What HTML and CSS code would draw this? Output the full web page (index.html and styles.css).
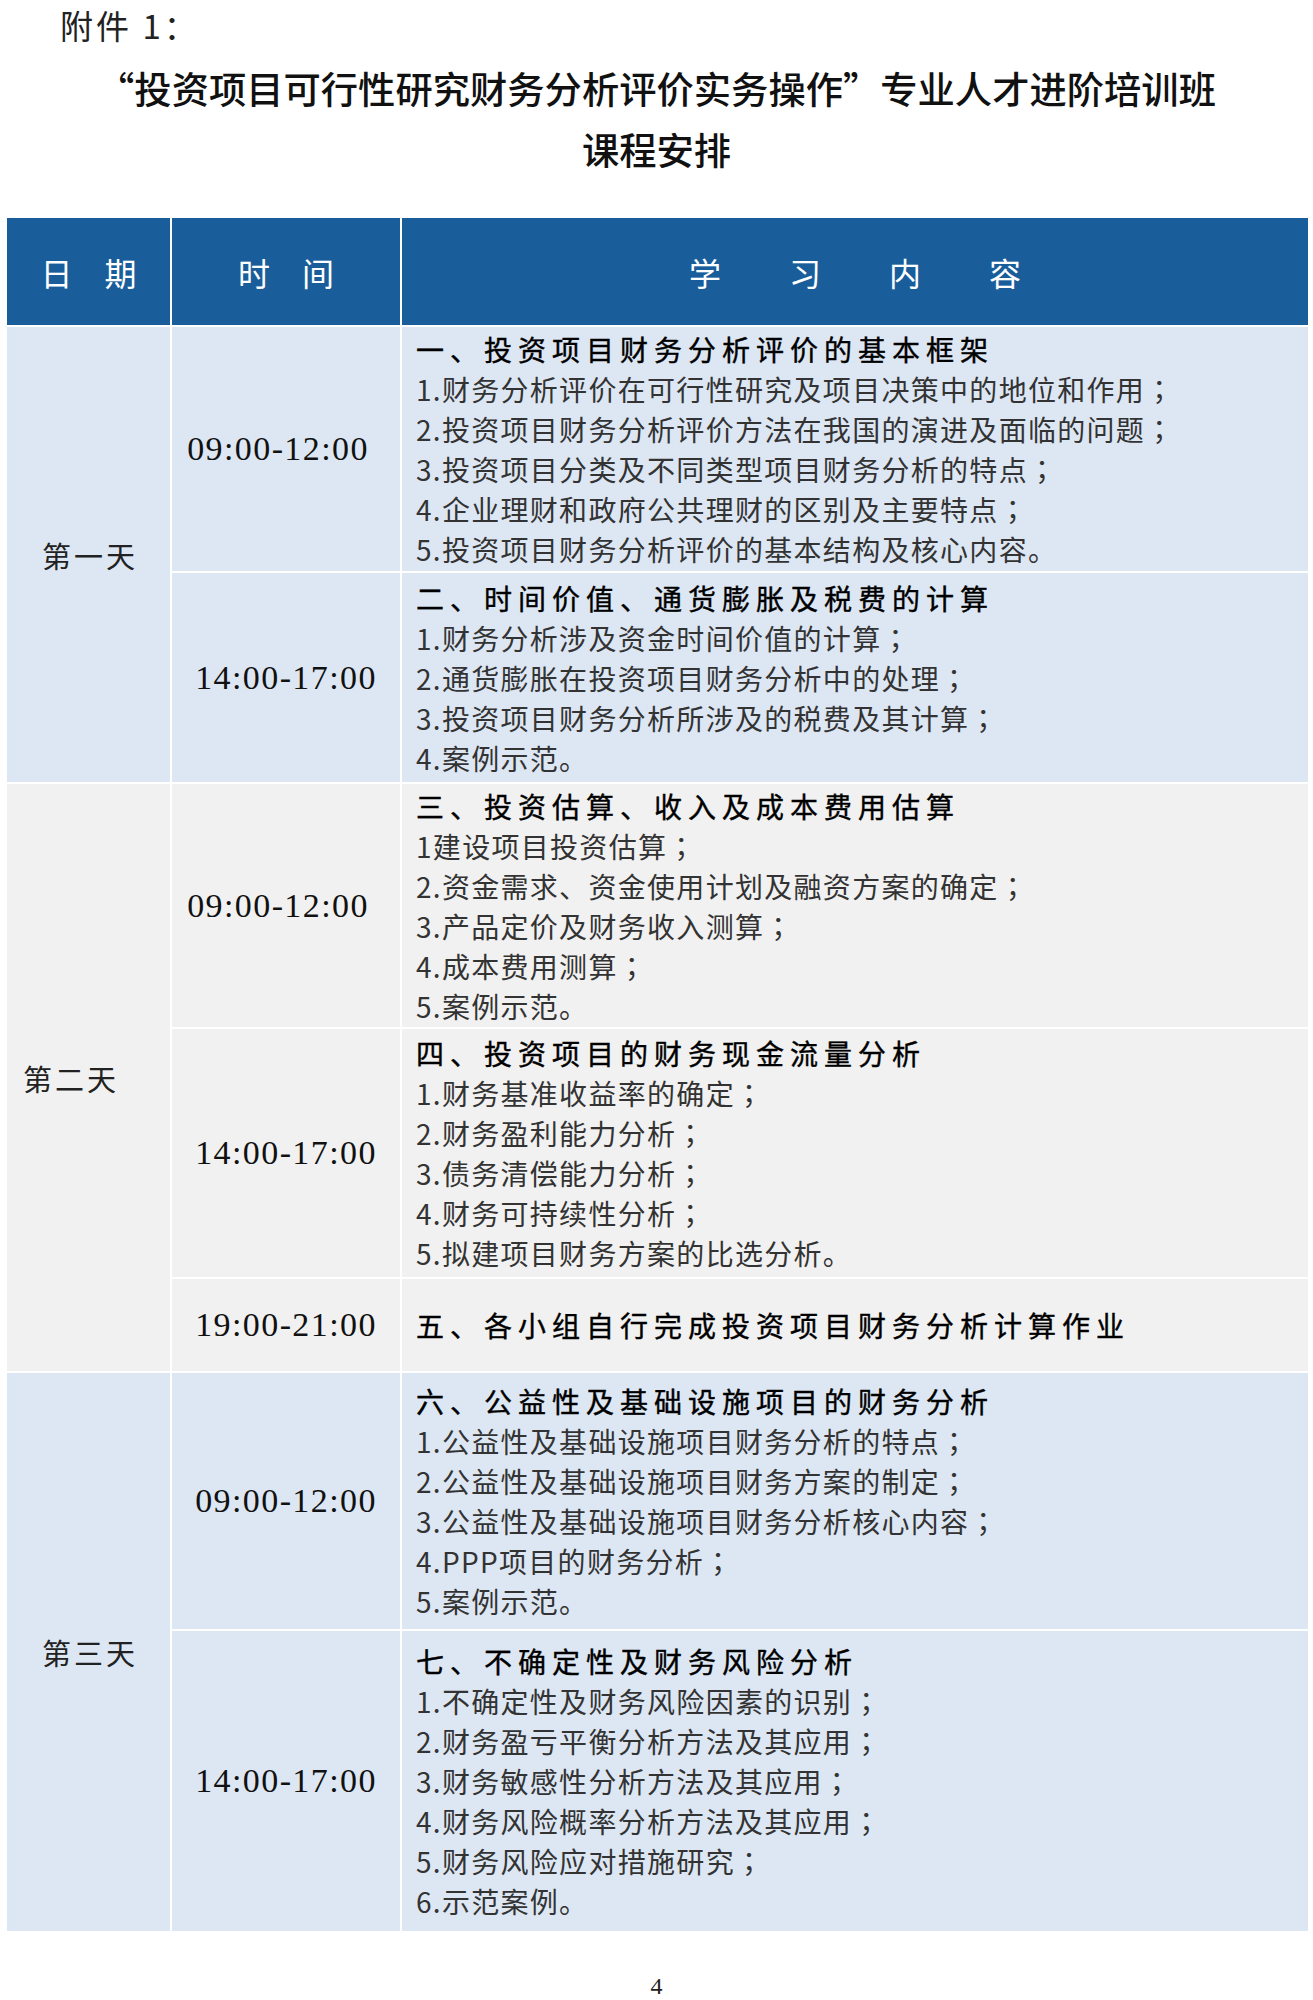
FILE: index.html
```html
<!DOCTYPE html>
<html lang="zh-CN">
<head>
<meta charset="utf-8">
<title>课程安排</title>
<link rel="stylesheet" href="styles.css">
</head>
<body>
<div class="page">
  <p class="attach">附件 1：</p>
  <h1 class="title">
    <span class="title-line">“投资项目可行性研究财务分析评价实务操作”专业人才进阶培训班</span>
    <span class="title-line">课程安排</span>
  </h1>

  <table class="schedule">
    <colgroup>
      <col class="col-date">
      <col class="col-time">
      <col class="col-content">
    </colgroup>
    <thead>
      <tr class="row-head">
        <th>日　期</th>
        <th>时　间</th>
        <th class="head-content">学习内容</th>
      </tr>
    </thead>
    <tbody class="day day-blue">
      <tr class="row-1a">
        <td class="date" rowspan="2">第一天</td>
        <td class="time time-shift">09:00-12:00</td>
        <td class="content">
          <div class="topic">一、投资项目财务分析评价的基本框架</div>
          <div class="item">1.财务分析评价在可行性研究及项目决策中的地位和作用<span class="pn" lang="zh-TW">；</span></div>
          <div class="item">2.投资项目财务分析评价方法在我国的演进及面临的问题<span class="pn" lang="zh-TW">；</span></div>
          <div class="item">3.投资项目分类及不同类型项目财务分析的特点<span class="pn" lang="zh-TW">；</span></div>
          <div class="item">4.企业理财和政府公共理财的区别及主要特点<span class="pn" lang="zh-TW">；</span></div>
          <div class="item">5.投资项目财务分析评价的基本结构及核心内容。</div>
        </td>
      </tr>
      <tr class="row-1b">
        <td class="time">14:00-17:00</td>
        <td class="content">
          <div class="topic">二、时间价值、通货膨胀及税费的计算</div>
          <div class="item">1.财务分析涉及资金时间价值的计算<span class="pn" lang="zh-TW">；</span></div>
          <div class="item">2.通货膨胀在投资项目财务分析中的处理<span class="pn" lang="zh-TW">；</span></div>
          <div class="item">3.投资项目财务分析所涉及的税费及其计算<span class="pn" lang="zh-TW">；</span></div>
          <div class="item">4.案例示范。</div>
        </td>
      </tr>
    </tbody>
    <tbody class="day day-gray">
      <tr class="row-2a">
        <td class="date date-left" rowspan="3">第二天</td>
        <td class="time time-shift">09:00-12:00</td>
        <td class="content">
          <div class="topic">三、投资估算、收入及成本费用估算</div>
          <div class="item">1建设项目投资估算<span class="pn" lang="zh-TW">；</span></div>
          <div class="item">2.资金需求、资金使用计划及融资方案的确定<span class="pn" lang="zh-TW">；</span></div>
          <div class="item">3.产品定价及财务收入测算<span class="pn" lang="zh-TW">；</span></div>
          <div class="item">4.成本费用测算<span class="pn" lang="zh-TW">；</span></div>
          <div class="item">5.案例示范。</div>
        </td>
      </tr>
      <tr class="row-2b">
        <td class="time">14:00-17:00</td>
        <td class="content">
          <div class="topic">四、投资项目的财务现金流量分析</div>
          <div class="item">1.财务基准收益率的确定<span class="pn" lang="zh-TW">；</span></div>
          <div class="item">2.财务盈利能力分析<span class="pn" lang="zh-TW">；</span></div>
          <div class="item">3.债务清偿能力分析<span class="pn" lang="zh-TW">；</span></div>
          <div class="item">4.财务可持续性分析<span class="pn" lang="zh-TW">；</span></div>
          <div class="item">5.拟建项目财务方案的比选分析。</div>
        </td>
      </tr>
      <tr class="row-2c">
        <td class="time">19:00-21:00</td>
        <td class="content">
          <div class="topic">五、各小组自行完成投资项目财务分析计算作业</div>
        </td>
      </tr>
    </tbody>
    <tbody class="day day-blue">
      <tr class="row-3a">
        <td class="date" rowspan="2">第三天</td>
        <td class="time">09:00-12:00</td>
        <td class="content">
          <div class="topic">六、公益性及基础设施项目的财务分析</div>
          <div class="item">1.公益性及基础设施项目财务分析的特点<span class="pn" lang="zh-TW">；</span></div>
          <div class="item">2.公益性及基础设施项目财务方案的制定<span class="pn" lang="zh-TW">；</span></div>
          <div class="item">3.公益性及基础设施项目财务分析核心内容<span class="pn" lang="zh-TW">；</span></div>
          <div class="item">4.PPP项目的财务分析<span class="pn" lang="zh-TW">；</span></div>
          <div class="item">5.案例示范。</div>
        </td>
      </tr>
      <tr class="row-3b">
        <td class="time">14:00-17:00</td>
        <td class="content">
          <div class="topic">七、不确定性及财务风险分析</div>
          <div class="item">1.不确定性及财务风险因素的识别<span class="pn" lang="zh-TW">；</span></div>
          <div class="item">2.财务盈亏平衡分析方法及其应用<span class="pn" lang="zh-TW">；</span></div>
          <div class="item">3.财务敏感性分析方法及其应用<span class="pn" lang="zh-TW">；</span></div>
          <div class="item">4.财务风险概率分析方法及其应用<span class="pn" lang="zh-TW">；</span></div>
          <div class="item">5.财务风险应对措施研究<span class="pn" lang="zh-TW">；</span></div>
          <div class="item">6.示范案例。</div>
        </td>
      </tr>
    </tbody>
  </table>

  <div class="page-num">4</div>
</div>
</body>
</html>
```

FILE: styles.css
```css
html, body {
  margin: 0;
  padding: 0;
  background: #ffffff;
}

.page {
  width: 1313px;
  padding-left: 5px;
  box-sizing: border-box;
  font-family: "Noto Sans CJK SC", "Noto Sans", sans-serif;
  color: #222;
}

.attach {
  margin: 0;
  padding-left: 55px;
  height: 50px;
  font-size: 33px;
  line-height: 50px;
  letter-spacing: 3px;
  font-weight: 400;
  color: #222;
}

.title {
  margin: 8px 0 36px 0;
  padding-right: 5px;
  text-align: center;
  font-size: 37.3px;
  line-height: 61px;
  font-weight: 500;
  color: #111;
}

.title-line {
  display: block;
}

.schedule {
  width: 1303px;
  table-layout: fixed;
  border-collapse: collapse;
  border-spacing: 0;
}

.col-date { width: 165px; }
.col-time { width: 230px; }
.col-content { width: 908px; }

.schedule th,
.schedule td {
  border: 2px solid #ffffff;
  padding: 0;
  vertical-align: middle;
}

.row-head th {
  height: 107px;
  background: #195d9a;
  color: #ffffff;
  font-size: 32px;
  font-weight: 400;
  text-align: center;
}

.head-content {
  letter-spacing: 68px;
  padding-left: 68px !important;
}

.day-blue td { background: #dde7f3; }
.day-gray td { background: #f1f1f1; }

.row-1a td { height: 244px; }
.row-1b td { height: 209px; }
.row-2a td { height: 243px; }
.row-2b td { height: 248px; }
.row-2c td { height: 92px; }
.row-3a td { height: 256px; }
.row-3b td { height: 300px; }

.date {
  text-align: center;
  font-size: 29px;
  letter-spacing: 3px;
  color: #222;
  padding-left: 3px !important;
}

.date-left {
  padding-left: 0 !important;
  padding-right: 35px !important;
}

.time {
  text-align: center;
  font-family: "Liberation Serif", "Times New Roman", serif;
  font-size: 34px;
  letter-spacing: 1.4px;
  color: #111;
}

.time-shift {
  padding-right: 16px !important;
}

.content {
  padding-left: 14px !important;
  font-size: 28px;
  line-height: 40px;
  color: #333;
}

.topic {
  font-size: 28px;
  letter-spacing: 6px;
  font-weight: 400;
  color: #000;
  -webkit-text-stroke: 0.4px #000;
}

.item {
  letter-spacing: 1.3px;
}

.pn {
  font-family: "Noto Sans CJK TC", "Noto Sans CJK SC", sans-serif;
}

.page-num {
  margin-top: 38px;
  text-align: center;
  padding-right: 5px;
  font-family: "Liberation Serif", "Times New Roman", serif;
  font-size: 24px;
  line-height: 30px;
  color: #222;
}
```
